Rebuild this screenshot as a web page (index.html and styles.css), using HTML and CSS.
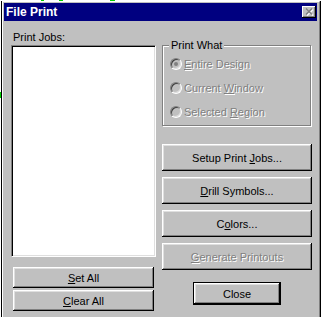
FILE: index.html
```html
<!DOCTYPE html>
<html lang="en">

<head>
    <meta charset="UTF-8">
    <meta name="viewport" content="width=device-width, initial-scale=1.0">
    <title>File Print</title>
    <link rel="stylesheet" href="styles.css">
</head>

<body>
    <!-- bits of desktop showing round the window -->
    <span class="speck speck-a"></span>
    <span class="speck speck-b"></span>
    <span class="speck speck-c"></span>
    <span class="speck speck-d"></span>

    <div class="window">
        <div class="frame">
            <div class="titlebar">
                <span class="title">File Print</span>
                <span class="close-btn">
                    <svg width="9" height="8" viewBox="0 0 9 8">
                        <path d="M2 1.5l6 6M8 1.5l-6 6" stroke="#fff" stroke-width="1.5" fill="none" />
                        <path d="M1 0.5l6 6M7 0.5l-6 6" stroke="#808080" stroke-width="1.5" fill="none" />
                    </svg>
                </span>
            </div>

            <div class="dialog">
                <div class="col-left">
                    <div class="label">Print Jobs:</div>
                    <div class="listbox"></div>
                    <div class="btn-stack">
                        <button class="btn small"><u>S</u>et All</button>
                        <button class="btn small"><u>C</u>lear All</button>
                    </div>
                </div>

                <div class="col-right">
                    <fieldset class="group">
                        <legend>Print What</legend>
                        <div class="radio disabled"><span class="radio-dot checked"></span><span><u>E</u>ntire Design</span></div>
                        <div class="radio disabled"><span class="radio-dot"></span><span>Current <u>W</u>indow</span></div>
                        <div class="radio disabled"><span class="radio-dot"></span><span>Selected <u>R</u>egion</span></div>
                    </fieldset>

                    <div class="btn-list">
                        <button class="btn">Setup Print <u>J</u>obs...</button>
                        <button class="btn"><u>D</u>rill Symbols...</button>
                        <button class="btn">C<u>o</u>lors...</button>
                        <button class="btn disabled"><u>G</u>enerate Printouts</button>
                    </div>

                    <button class="btn default">Close</button>
                </div>
            </div>
        </div>
    </div>
</body>

</html>
```

FILE: styles.css
```css
* {
    margin: 0;
    padding: 0;
    box-sizing: border-box;
}

html,
body {
    height: 100%;
}

body {
    position: relative;
    overflow: hidden;
    background: #fff;
    font-family: "Liberation Sans", Arial, sans-serif;
    font-size: 11px;
    color: #000;
}

/* desktop specks */
.speck {
    position: absolute;
    background: #00d000;
}

.speck-a { left: 41px; top: 0; width: 3px; height: 1px; }
.speck-b { left: 59px; top: 0; width: 4px; height: 1px; }
.speck-c { left: 110px; top: 0; width: 5px; height: 1px; }
.speck-d { left: 0; top: 92px; width: 1px; height: 6px; }

.window {
    margin: 1px 0 0 1px;
    height: 330px;
    border-left: 1px solid #000;
    border-right: 1px solid #000;
    background: #c0c0c0;
}

.frame {
    height: 100%;
    border-top: 1px solid #fff;
    border-left: 1px solid #fff;
    border-right: 1px solid #808080;
    padding: 1px 2px 0 1px;
}

.titlebar {
    height: 18px;
    display: flex;
    align-items: center;
    justify-content: space-between;
    padding: 0 1px 0 2px;
    background: #000080;
    color: #fff;
}

.title {
    font-size: 12px;
    font-weight: bold;
    line-height: 18px;
}

.close-btn {
    width: 14px;
    height: 12px;
    display: flex;
    align-items: center;
    justify-content: center;
    background: #c0c0c0;
    box-shadow: inset -1px -1px #000, inset 1px 1px #fff, inset -2px -2px #808080;
}

.dialog {
    display: flex;
    gap: 6px;
    padding: 10px 5px 0 7px;
}

.col-left {
    width: 145px;
    display: flex;
    flex-direction: column;
}

.label {
    line-height: 13px;
    padding-left: 2px;
}

.listbox {
    margin-top: 1px;
    height: 212px;
    background: #fff;
    border: 1px solid;
    border-color: #808080 #fff #fff #808080;
    box-shadow: inset 1px 1px #000, inset -1px -1px #dfdfdf;
}

.btn-stack {
    margin-top: 10px;
    padding: 0 2px;
    display: flex;
    flex-direction: column;
    gap: 2px;
}

.btn {
    height: 27px;
    text-align: center;
    border: 0;
    background: #c0c0c0;
    color: #000;
    font: inherit;
    box-shadow: inset -1px -1px #000, inset 1px 1px #fff, inset -2px -2px #808080, inset 2px 2px #dfdfdf;
}

.btn.small {
    height: 21px;
}

.btn.disabled,
.radio.disabled {
    color: #808080;
    text-shadow: 1px 1px 0 #fff;
}

.btn.default {
    width: 88px;
    height: 23px;
    margin: 12px auto 0;
    border: 1px solid #000;
}

.col-right {
    width: 150px;
    display: flex;
    flex-direction: column;
}

.group {
    width: 149px;
    margin-top: 8px;
    padding: 0 4px 1px 6px;
    border: 1px solid #808080;
    box-shadow: inset 1px 1px #fff, 1px 1px #fff;
}

.group legend {
    padding: 0 2px;
    line-height: 13px;
    background: #c0c0c0;
}

.radio {
    height: 24px;
    display: flex;
    align-items: center;
    gap: 2px;
    padding-left: 1px;
}

.radio-dot {
    position: relative;
    width: 12px;
    height: 12px;
    flex: none;
    border-radius: 50%;
    border: 1px solid;
    border-color: #808080 #fff #fff #808080;
    box-shadow: inset 1px 1px #404040, inset -1px -1px #dfdfdf;
    background: #c0c0c0;
}

.radio-dot.checked::after {
    content: "";
    position: absolute;
    left: 3px;
    top: 3px;
    width: 4px;
    height: 4px;
    border-radius: 50%;
    background: #808080;
}

.btn-list {
    margin-top: 18px;
    display: flex;
    flex-direction: column;
    gap: 6px;
}
```
